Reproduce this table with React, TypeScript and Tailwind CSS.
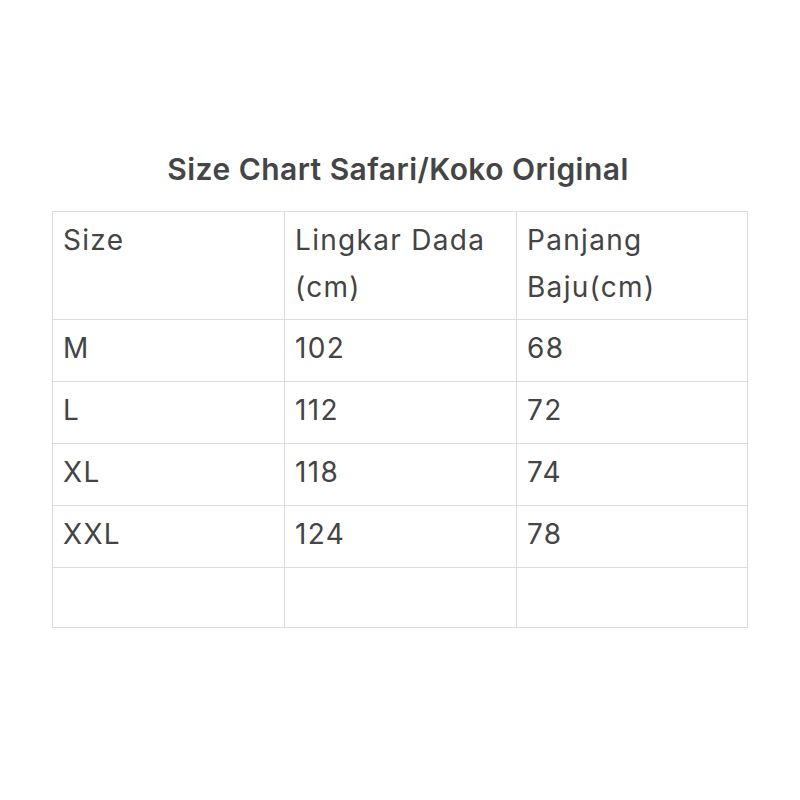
import React from "react";

const rows = [
  ["M", "102", "68"],
  ["L", "112", "72"],
  ["XL", "118", "74"],
  ["XXL", "124", "78"],
  ["", "", ""],
];

export default function App() {
  return (
    <div
      className="w-[800px] h-[800px] bg-white text-[#444444] flex flex-col items-center"
      style={{ fontFamily: "Inter, 'Noto Sans', sans-serif" }}
    >
      <h1 className="mt-[150px] text-[30px] leading-[39px] font-semibold text-[#454545] tracking-[0.45px] -translate-x-[2px]">
        Size Chart Safari/Koko Original
      </h1>
      <table className="mt-[22px] border-collapse w-[695px] table-fixed text-[28px] leading-[47px] tracking-[1.3px]">
        <colgroup>
          <col className="w-[232px]" />
          <col className="w-[232px]" />
          <col className="w-[231px]" />
        </colgroup>
        <tbody>
          <tr className="h-[108px]">
            <td className="border border-[#dddddd] align-top pl-[10px] pt-[5px] pr-1">Size</td>
            <td className="border border-[#dddddd] align-top pl-[10px] pt-[5px] pr-1">Lingkar Dada (cm)</td>
            <td className="border border-[#dddddd] align-top pl-[10px] pt-[5px] pr-1">Panjang Baju(cm)</td>
          </tr>
          {rows.map((r, i) => (
            <tr key={i} className={i === rows.length - 1 ? "h-[60px]" : "h-[62px]"}>
              {r.map((c, j) => (
                <td key={j} className="border border-[#dddddd] align-top pl-[10px] pt-[5px]">
                  {c}
                </td>
              ))}
            </tr>
          ))}
        </tbody>
      </table>
    </div>
  );
}
